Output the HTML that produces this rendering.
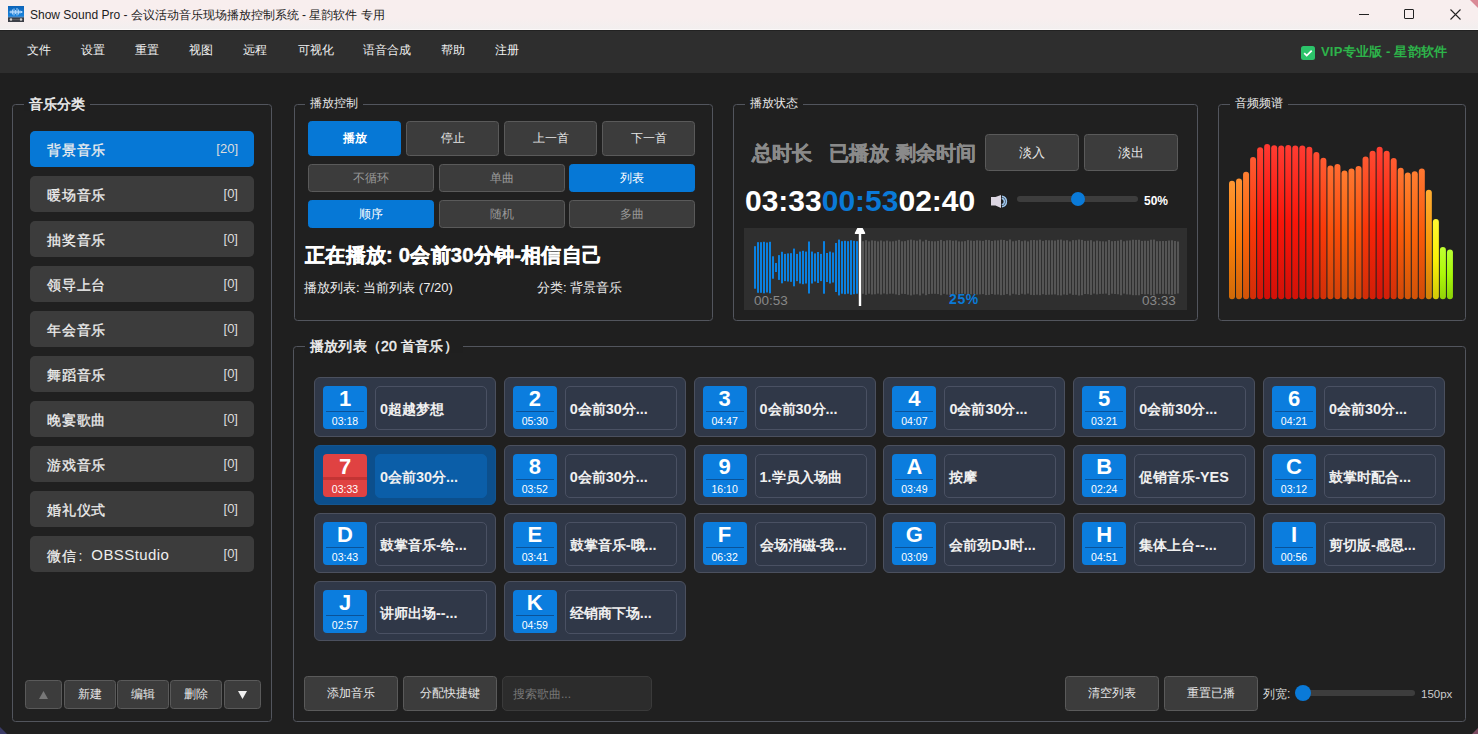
<!DOCTYPE html><html><head><meta charset="utf-8"><style>
*{box-sizing:border-box;margin:0;padding:0}
html,body{width:1478px;height:734px;overflow:hidden;background:#1f1f1f;font-family:"Liberation Sans", sans-serif;color:#fff}
.a{position:absolute}
.sb{-webkit-text-stroke:0.45px currentColor}
.t{position:absolute;white-space:nowrap;line-height:1}
.grp{position:absolute;border:1px solid #52555d;border-radius:3.5px;background:#202020}
.gt{position:absolute;white-space:nowrap;line-height:1;background:#1f1f1f;padding:0 5px}
.btn{position:absolute;background:#3c3c3c;border:1px solid #5a5a5a;border-radius:3.5px;display:flex;align-items:center;justify-content:center;white-space:nowrap;color:#e6e6e6;font-size:12px}
.blue{background:#0678d6;border-color:#0678d6;color:#fff}
.cat{position:absolute;left:30px;width:224px;height:36px;background:#3c3c3c;border-radius:5px}
.cat .n{position:absolute;left:17px;top:12px;font-size:14.2px;letter-spacing:0.8px;-webkit-text-stroke:0.3px currentColor;line-height:1;color:#eee}
.cat .c{position:absolute;right:16px;top:11px;font-size:13px;line-height:1;color:#ddd}
.tile{position:absolute;width:182px;height:60px;background:#303848;border:1px solid #4b505e;border-radius:6px}
.badge{position:absolute;left:8px;top:8px;width:44px;height:43px;background:#0b7dde;border-radius:4px;overflow:hidden}
.badge .num{position:absolute;left:0;right:0;top:2px;text-align:center;font-size:22px;font-weight:bold;line-height:1;color:#fff}
.badge .sep{position:absolute;left:3px;right:3px;top:24.5px;height:1.5px;background:#0a5298}
.badge .tm{position:absolute;left:0;right:0;top:30px;text-align:center;font-size:10.5px;line-height:1;color:#fff}
.nbox{position:absolute;left:60px;top:8px;width:112px;height:44px;border:1px solid #4a5163;border-radius:5px}
.nbox span{position:absolute;left:4px;top:15px;font-size:14.4px;font-weight:bold;line-height:1;color:#f0f0f0;white-space:nowrap}
</style></head><body>
<div class="a" style="left:0;top:0;width:1478px;height:30px;background:linear-gradient(#f8eeee 0,#f8eeee 60%,#f2efef 100%)"></div>
<div class="a" style="left:0;top:29px;width:1478px;height:1px;background:#fbf8f8"></div>
<svg class="a" style="left:8px;top:6px" width="16" height="16" viewBox="0 0 16 16">
<defs><linearGradient id="ic" x1="0" y1="0" x2="0" y2="1"><stop offset="0" stop-color="#0d63b8"/><stop offset="1" stop-color="#1a86e0"/></linearGradient></defs>
<rect x="0" y="0" width="16" height="11" fill="url(#ic)"/>
<rect x="0" y="11" width="16" height="5" fill="#3b3f47"/>
<path d="M1.5 6h13" stroke="#d8ecff" stroke-width="1"/>
<path d="M3 4.5v3M4.5 3.5v5M6 2.5v7M7.5 4v4M9 2v7.5M10.5 3.5v5M12 4.5v3M13.5 5v2" stroke="#b8dcff" stroke-width="0.9"/>
<rect x="0" y="10.5" width="16" height="1" fill="#5a8cc0"/>
<circle cx="3" cy="13.5" r="1.3" fill="#cfcfcf"/><circle cx="13" cy="13.5" r="1.3" fill="#cfcfcf"/>
<path d="M4.5 13.5h7" stroke="#666" stroke-width="0.8"/>
</svg>
<div class="t" style="left:30px;top:9px;font-size:12px;color:#1c1c1c">Show Sound Pro - 会议活动音乐现场播放控制系统 - 星韵软件 专用</div>
<div class="a" style="left:1359px;top:14px;width:10px;height:1px;background:#222"></div>
<div class="a" style="left:1404px;top:9px;width:10px;height:10px;border:1px solid #222;border-radius:1px"></div>
<svg class="a" style="left:1450px;top:9px" width="11" height="11" viewBox="0 0 11 11"><path d="M0.5 0.5L10.5 10.5M10.5 0.5L0.5 10.5" stroke="#222" stroke-width="1.1"/></svg>
<div class="a" style="left:0;top:30px;width:1478px;height:43px;background:#2e2e2e"></div>
<div class="a" style="left:0;top:30px;width:1478px;height:1px;background:#222"></div>
<div class="t" style="left:27px;top:44px;font-size:12px;color:#f0f0f0">文件</div>
<div class="t" style="left:81px;top:44px;font-size:12px;color:#f0f0f0">设置</div>
<div class="t" style="left:135px;top:44px;font-size:12px;color:#f0f0f0">重置</div>
<div class="t" style="left:189px;top:44px;font-size:12px;color:#f0f0f0">视图</div>
<div class="t" style="left:243px;top:44px;font-size:12px;color:#f0f0f0">远程</div>
<div class="t" style="left:298px;top:44px;font-size:12px;color:#f0f0f0">可视化</div>
<div class="t" style="left:363px;top:44px;font-size:12px;color:#f0f0f0">语音合成</div>
<div class="t" style="left:441px;top:44px;font-size:12px;color:#f0f0f0">帮助</div>
<div class="t" style="left:495px;top:44px;font-size:12px;color:#f0f0f0">注册</div>
<svg class="a" style="left:1301px;top:46px" width="14" height="14" viewBox="0 0 14 14"><rect width="14" height="14" rx="2.5" fill="#2cc46a"/><path d="M3.2 7.2l2.5 2.4 5-5" stroke="#fff" stroke-width="1.8" fill="none"/></svg>
<div class="t" style="left:1321px;top:45px;font-size:13px;letter-spacing:0.2px;font-weight:bold;color:#2db34a">VIP专业版 - 星韵软件</div>
<div class="grp" style="left:12px;top:104px;width:260px;height:618px"></div>
<div class="gt" style="-webkit-text-stroke:0.5px currentColor;left:24px;top:97.5px;font-size:13.6px;color:#f0f0f0">音乐分类</div>
<div class="cat" style="top:131px;background:#0678d6"><div class="n">背景音乐</div><div class="c">[20]</div></div>
<div class="cat" style="top:176px"><div class="n">暖场音乐</div><div class="c">[0]</div></div>
<div class="cat" style="top:221px"><div class="n">抽奖音乐</div><div class="c">[0]</div></div>
<div class="cat" style="top:266px"><div class="n">领导上台</div><div class="c">[0]</div></div>
<div class="cat" style="top:311px"><div class="n">年会音乐</div><div class="c">[0]</div></div>
<div class="cat" style="top:356px"><div class="n">舞蹈音乐</div><div class="c">[0]</div></div>
<div class="cat" style="top:401px"><div class="n">晚宴歌曲</div><div class="c">[0]</div></div>
<div class="cat" style="top:446px"><div class="n">游戏音乐</div><div class="c">[0]</div></div>
<div class="cat" style="top:491px"><div class="n">婚礼仪式</div><div class="c">[0]</div></div>
<div class="cat" style="top:536px"><div class="n">微信<span style='-webkit-text-stroke:0;margin:0 8px 0 2px'>:</span><span style='-webkit-text-stroke:0;letter-spacing:0.4px;font-size:15px;position:relative;top:-1px'>OBSStudio</span></div><div class="c">[0]</div></div>
<div class="btn" style="left:25px;top:680px;width:37px;height:29px"><svg width="9" height="8" style="position:absolute;left:12.5px;top:10px"><path d="M4.5 0L9 8H0z" fill="#777"/></svg></div>
<div class="btn" style="left:64px;top:680px;width:52px;height:29px">新建</div>
<div class="btn" style="left:117px;top:680px;width:52px;height:29px">编辑</div>
<div class="btn" style="left:170px;top:680px;width:52px;height:29px">删除</div>
<div class="btn" style="left:224px;top:680px;width:37px;height:29px"><svg width="9" height="8" style="position:absolute;left:13px;top:10px"><path d="M0 0H9L4.5 8z" fill="#f0f0f0"/></svg></div>
<div class="grp" style="left:294px;top:104px;width:419px;height:217px"></div>
<div class="gt" style="left:305px;top:97px;font-size:12px;color:#e8e8e8">播放控制</div>
<div class="btn blue" style="left:308px;top:121px;width:93px;height:35px;font-size:12px;font-weight:bold">播放</div>
<div class="btn" style="left:406px;top:121px;width:93px;height:35px;font-size:12px">停止</div>
<div class="btn" style="left:504px;top:121px;width:93px;height:35px;font-size:12px">上一首</div>
<div class="btn" style="left:602px;top:121px;width:93px;height:35px;font-size:12px">下一首</div>
<div class="btn" style="left:308.0px;top:164px;width:126px;height:28px;font-size:11.5px;color:#999">不循环</div>
<div class="btn" style="left:438.5px;top:164px;width:126px;height:28px;font-size:11.5px;color:#999">单曲</div>
<div class="btn blue" style="left:569.0px;top:164px;width:126px;height:28px;font-size:11.5px;color:#fff">列表</div>
<div class="btn blue" style="left:308.0px;top:200px;width:126px;height:28px;font-size:11.5px;color:#fff">顺序</div>
<div class="btn" style="left:438.5px;top:200px;width:126px;height:28px;font-size:11.5px;color:#999">随机</div>
<div class="btn" style="left:569.0px;top:200px;width:126px;height:28px;font-size:11.5px;color:#999">多曲</div>
<div class="t sb" style="left:305px;top:245px;letter-spacing:0.25px;font-size:20.2px;font-weight:bold;color:#fff">正在播放: 0会前30分钟-相信自己</div>
<div class="t" style="left:304px;top:281px;font-size:13px;color:#eee">播放列表: 当前列表 (7/20)</div>
<div class="t" style="left:537px;top:281px;font-size:13px;color:#eee">分类: 背景音乐</div>
<div class="grp" style="left:733px;top:104px;width:465px;height:217px"></div>
<div class="gt" style="left:745px;top:97px;font-size:12px;color:#e8e8e8">播放状态</div>
<div class="t sb" style="left:752px;top:143px;font-size:20px;font-weight:bold;color:#8a8a8a">总时长</div>
<div class="t sb" style="left:829px;top:143px;font-size:20px;font-weight:bold;color:#8a8a8a">已播放</div>
<div class="t sb" style="left:896px;top:143px;font-size:20px;font-weight:bold;color:#8a8a8a">剩余时间</div>
<div class="btn" style="left:985px;top:134px;width:94px;height:37px;font-size:13px">淡入</div>
<div class="btn" style="left:1084px;top:134px;width:94px;height:37px;font-size:13px">淡出</div>
<div class="t" style="left:745px;top:186px;font-size:30px;font-weight:bold;color:#fff">03:33<span style="color:#0a7ad8">00:53</span>02:40</div>
<svg class="a" style="left:984px;top:188px" width="30" height="24" viewBox="0 0 30 24"><path d="M7 9H11.5L17 7V20L11.5 17.5H7z" fill="#dcd6e2"/><path d="M17.8 10.2A3.4 3.4 0 0 1 17.8 16.8" stroke="#9cc4ec" stroke-width="1.5" fill="none"/><path d="M18 8.2A5.4 5.4 0 0 1 18 18.8" stroke="#9cc4ec" stroke-width="1.6" fill="none"/></svg>
<div class="a" style="left:1017px;top:196px;width:121px;height:6px;background:#3d3d3d;border-radius:3px"></div>
<div class="a" style="left:1071px;top:192px;width:14px;height:14px;background:#0a7ad8;border-radius:50%"></div>
<div class="t" style="left:1144px;top:195px;font-size:12px;font-weight:bold;color:#fff">50%</div>
<div class="a" style="left:744px;top:228px;width:443px;height:82px;background:#2f2f2f"></div>
<svg class="a" style="left:744px;top:228px" width="444" height="82"><rect x="10" y="18.2" width="2" height="42.5" fill="#0a80e0"/><rect x="13" y="14.2" width="2" height="50.6" fill="#0a80e0"/><rect x="16" y="14.2" width="2" height="50.6" fill="#0a80e0"/><rect x="19" y="13.8" width="2" height="51.5" fill="#0a80e0"/><rect x="22" y="14.5" width="2" height="50.0" fill="#0a80e0"/><rect x="25" y="13.8" width="2" height="51.5" fill="#0a80e0"/><rect x="28" y="28.3" width="2" height="22.4" fill="#0a80e0"/><rect x="31" y="35.0" width="2" height="9.0" fill="#0a80e0"/><rect x="34" y="27.1" width="2" height="24.8" fill="#0a80e0"/><rect x="37" y="23.8" width="2" height="31.5" fill="#0a80e0"/><rect x="40" y="25.9" width="2" height="27.2" fill="#0a80e0"/><rect x="43" y="25.4" width="2" height="28.1" fill="#0a80e0"/><rect x="46" y="25.2" width="2" height="28.6" fill="#0a80e0"/><rect x="49" y="20.6" width="2" height="37.7" fill="#0a80e0"/><rect x="52" y="25.9" width="2" height="27.2" fill="#0a80e0"/><rect x="55" y="23.6" width="2" height="31.9" fill="#0a80e0"/><rect x="58" y="22.8" width="2" height="33.4" fill="#0a80e0"/><rect x="61" y="23.6" width="2" height="31.9" fill="#0a80e0"/><rect x="64" y="13.5" width="2" height="52.0" fill="#0a80e0"/><rect x="67" y="23.6" width="2" height="31.9" fill="#0a80e0"/><rect x="70" y="25.4" width="2" height="28.1" fill="#0a80e0"/><rect x="73" y="24.0" width="2" height="31.0" fill="#0a80e0"/><rect x="76" y="25.9" width="2" height="27.2" fill="#0a80e0"/><rect x="79" y="13.2" width="2" height="52.5" fill="#0a80e0"/><rect x="82" y="25.0" width="2" height="29.0" fill="#0a80e0"/><rect x="85" y="23.6" width="2" height="31.9" fill="#0a80e0"/><rect x="88" y="24.5" width="2" height="30.0" fill="#0a80e0"/><rect x="91" y="15.0" width="2" height="49.0" fill="#0a80e0"/><rect x="94" y="11.6" width="2" height="55.8" fill="#0a80e0"/><rect x="97" y="13.2" width="2" height="52.5" fill="#0a80e0"/><rect x="100" y="12.8" width="2" height="53.4" fill="#0a80e0"/><rect x="103" y="13.2" width="2" height="52.5" fill="#0a80e0"/><rect x="106" y="12.3" width="2" height="54.4" fill="#0a80e0"/><rect x="109" y="12.8" width="2" height="53.4" fill="#0a80e0"/><rect x="112" y="13.2" width="2" height="52.5" fill="#0a80e0"/><rect x="115" y="12.9" width="2" height="53.3" fill="#555"/><rect x="118" y="13.2" width="2" height="52.6" fill="#555"/><rect x="121" y="12.2" width="2" height="54.6" fill="#555"/><rect x="124" y="13.4" width="2" height="52.3" fill="#555"/><rect x="127" y="12.4" width="2" height="54.1" fill="#555"/><rect x="130" y="12.8" width="2" height="53.5" fill="#555"/><rect x="133" y="13.4" width="2" height="52.2" fill="#555"/><rect x="136" y="12.5" width="2" height="54.0" fill="#555"/><rect x="139" y="13.4" width="2" height="52.1" fill="#555"/><rect x="142" y="12.6" width="2" height="53.7" fill="#555"/><rect x="145" y="13.4" width="2" height="52.3" fill="#555"/><rect x="148" y="13.3" width="2" height="52.4" fill="#555"/><rect x="151" y="12.7" width="2" height="53.7" fill="#555"/><rect x="154" y="11.8" width="2" height="55.3" fill="#555"/><rect x="157" y="13.3" width="2" height="52.5" fill="#555"/><rect x="160" y="13.1" width="2" height="52.9" fill="#555"/><rect x="163" y="12.2" width="2" height="54.5" fill="#555"/><rect x="166" y="11.6" width="2" height="55.8" fill="#555"/><rect x="169" y="12.3" width="2" height="54.3" fill="#555"/><rect x="172" y="12.7" width="2" height="53.6" fill="#555"/><rect x="175" y="11.5" width="2" height="55.9" fill="#555"/><rect x="178" y="13.4" width="2" height="52.2" fill="#555"/><rect x="181" y="11.8" width="2" height="55.4" fill="#555"/><rect x="184" y="12.9" width="2" height="53.2" fill="#555"/><rect x="187" y="13.2" width="2" height="52.6" fill="#555"/><rect x="190" y="13.3" width="2" height="52.5" fill="#555"/><rect x="193" y="12.9" width="2" height="53.2" fill="#555"/><rect x="196" y="11.9" width="2" height="55.3" fill="#555"/><rect x="199" y="13.1" width="2" height="52.7" fill="#555"/><rect x="202" y="12.3" width="2" height="54.3" fill="#555"/><rect x="205" y="12.2" width="2" height="54.6" fill="#555"/><rect x="208" y="12.8" width="2" height="53.5" fill="#555"/><rect x="211" y="12.4" width="2" height="54.2" fill="#555"/><rect x="214" y="13.4" width="2" height="52.3" fill="#555"/><rect x="217" y="13.4" width="2" height="52.2" fill="#555"/><rect x="220" y="13.1" width="2" height="52.8" fill="#555"/><rect x="223" y="12.1" width="2" height="54.7" fill="#555"/><rect x="226" y="12.6" width="2" height="53.7" fill="#555"/><rect x="229" y="12.9" width="2" height="53.3" fill="#555"/><rect x="232" y="12.3" width="2" height="54.3" fill="#555"/><rect x="235" y="12.6" width="2" height="53.8" fill="#555"/><rect x="238" y="12.9" width="2" height="53.2" fill="#555"/><rect x="241" y="11.9" width="2" height="55.2" fill="#555"/><rect x="244" y="12.1" width="2" height="54.8" fill="#555"/><rect x="247" y="13.0" width="2" height="53.0" fill="#555"/><rect x="250" y="12.4" width="2" height="54.3" fill="#555"/><rect x="253" y="12.4" width="2" height="54.1" fill="#555"/><rect x="256" y="11.7" width="2" height="55.5" fill="#555"/><rect x="259" y="12.0" width="2" height="54.9" fill="#555"/><rect x="262" y="12.9" width="2" height="53.2" fill="#555"/><rect x="265" y="11.5" width="2" height="55.9" fill="#555"/><rect x="268" y="13.3" width="2" height="52.5" fill="#555"/><rect x="271" y="12.7" width="2" height="53.7" fill="#555"/><rect x="274" y="12.0" width="2" height="55.0" fill="#555"/><rect x="277" y="13.2" width="2" height="52.6" fill="#555"/><rect x="280" y="12.5" width="2" height="54.0" fill="#555"/><rect x="283" y="13.4" width="2" height="52.2" fill="#555"/><rect x="286" y="12.2" width="2" height="54.7" fill="#555"/><rect x="289" y="12.0" width="2" height="55.1" fill="#555"/><rect x="292" y="12.4" width="2" height="54.3" fill="#555"/><rect x="295" y="11.7" width="2" height="55.5" fill="#555"/><rect x="298" y="12.9" width="2" height="53.3" fill="#555"/><rect x="301" y="12.1" width="2" height="54.8" fill="#555"/><rect x="304" y="12.3" width="2" height="54.4" fill="#555"/><rect x="307" y="12.3" width="2" height="54.3" fill="#555"/><rect x="310" y="12.6" width="2" height="53.8" fill="#555"/><rect x="313" y="11.8" width="2" height="55.4" fill="#555"/><rect x="316" y="11.6" width="2" height="55.8" fill="#555"/><rect x="319" y="12.6" width="2" height="53.9" fill="#555"/><rect x="322" y="12.2" width="2" height="54.7" fill="#555"/><rect x="325" y="13.4" width="2" height="52.2" fill="#555"/><rect x="328" y="12.1" width="2" height="54.8" fill="#555"/><rect x="331" y="12.2" width="2" height="54.6" fill="#555"/><rect x="334" y="11.5" width="2" height="56.0" fill="#555"/><rect x="337" y="11.9" width="2" height="55.3" fill="#555"/><rect x="340" y="12.9" width="2" height="53.1" fill="#555"/><rect x="343" y="12.7" width="2" height="53.5" fill="#555"/><rect x="346" y="12.2" width="2" height="54.7" fill="#555"/><rect x="349" y="13.5" width="2" height="52.1" fill="#555"/><rect x="352" y="12.6" width="2" height="53.8" fill="#555"/><rect x="355" y="13.2" width="2" height="52.7" fill="#555"/><rect x="358" y="13.3" width="2" height="52.5" fill="#555"/><rect x="361" y="13.4" width="2" height="52.2" fill="#555"/><rect x="364" y="12.0" width="2" height="55.1" fill="#555"/><rect x="367" y="13.2" width="2" height="52.5" fill="#555"/><rect x="370" y="13.0" width="2" height="53.0" fill="#555"/><rect x="373" y="12.7" width="2" height="53.6" fill="#555"/><rect x="376" y="11.8" width="2" height="55.5" fill="#555"/><rect x="379" y="13.3" width="2" height="52.3" fill="#555"/><rect x="382" y="12.6" width="2" height="53.8" fill="#555"/><rect x="385" y="12.4" width="2" height="54.2" fill="#555"/><rect x="388" y="11.7" width="2" height="55.5" fill="#555"/><rect x="391" y="11.9" width="2" height="55.3" fill="#555"/><rect x="394" y="11.8" width="2" height="55.5" fill="#555"/><rect x="397" y="12.9" width="2" height="53.1" fill="#555"/><rect x="400" y="12.7" width="2" height="53.7" fill="#555"/><rect x="403" y="12.8" width="2" height="53.4" fill="#555"/><rect x="406" y="11.7" width="2" height="55.5" fill="#555"/><rect x="409" y="11.6" width="2" height="55.8" fill="#555"/><rect x="412" y="13.2" width="2" height="52.6" fill="#555"/><rect x="415" y="13.1" width="2" height="52.7" fill="#555"/><rect x="418" y="13.0" width="2" height="52.9" fill="#555"/><rect x="421" y="13.0" width="2" height="52.9" fill="#555"/><rect x="424" y="12.5" width="2" height="53.9" fill="#555"/><rect x="427" y="12.3" width="2" height="54.4" fill="#555"/><rect x="430" y="13.0" width="2" height="53.1" fill="#555"/><rect x="433" y="13.5" width="2" height="52.0" fill="#555"/></svg>
<div class="t" style="left:754px;top:294px;font-size:13.5px;color:#888">00:53</div>
<div class="t" style="left:1142px;top:294px;font-size:13.5px;color:#888">03:33</div>
<div class="t" style="left:949px;top:292px;font-size:14px;letter-spacing:0.6px;font-weight:bold;color:#0a7ad8">25%</div>
<svg class="a" style="left:854px;top:227px" width="12" height="80"><path d="M3.8 1.6H8.2L10.6 6.2H1.4z" fill="#fff" stroke="#fff" stroke-width="1.4" stroke-linejoin="round"/><rect x="4.8" y="5" width="2.4" height="74" fill="#fff"/></svg>
<div class="grp" style="left:1218px;top:104px;width:248px;height:217px"></div>
<div class="gt" style="left:1230px;top:97px;font-size:12px;color:#e8e8e8">音频频谱</div>
<svg class="a" style="left:1220px;top:130px" width="245" height="180"><defs><linearGradient id="g0" x1="0" y1="0" x2="0" y2="1"><stop offset="0" stop-color="#ff9632"/><stop offset="0.5" stop-color="#f97f09"/><stop offset="1" stop-color="#d16a08"/></linearGradient><linearGradient id="g1" x1="0" y1="0" x2="0" y2="1"><stop offset="0" stop-color="#ff9132"/><stop offset="0.5" stop-color="#f97809"/><stop offset="1" stop-color="#d16408"/></linearGradient><linearGradient id="g2" x1="0" y1="0" x2="0" y2="1"><stop offset="0" stop-color="#ff7f32"/><stop offset="0.5" stop-color="#f96309"/><stop offset="1" stop-color="#d15308"/></linearGradient><linearGradient id="g3" x1="0" y1="0" x2="0" y2="1"><stop offset="0" stop-color="#ff5a32"/><stop offset="0.5" stop-color="#f93709"/><stop offset="1" stop-color="#d12e08"/></linearGradient><linearGradient id="g4" x1="0" y1="0" x2="0" y2="1"><stop offset="0" stop-color="#ff4132"/><stop offset="0.5" stop-color="#f91a09"/><stop offset="1" stop-color="#d11608"/></linearGradient><linearGradient id="g5" x1="0" y1="0" x2="0" y2="1"><stop offset="0" stop-color="#ff3932"/><stop offset="0.5" stop-color="#f91109"/><stop offset="1" stop-color="#d10e08"/></linearGradient><linearGradient id="g6" x1="0" y1="0" x2="0" y2="1"><stop offset="0" stop-color="#ff3c32"/><stop offset="0.5" stop-color="#f91409"/><stop offset="1" stop-color="#d11108"/></linearGradient><linearGradient id="g7" x1="0" y1="0" x2="0" y2="1"><stop offset="0" stop-color="#ff3c32"/><stop offset="0.5" stop-color="#f91509"/><stop offset="1" stop-color="#d11208"/></linearGradient><linearGradient id="g8" x1="0" y1="0" x2="0" y2="1"><stop offset="0" stop-color="#ff3b32"/><stop offset="0.5" stop-color="#f91409"/><stop offset="1" stop-color="#d11008"/></linearGradient><linearGradient id="g9" x1="0" y1="0" x2="0" y2="1"><stop offset="0" stop-color="#ff3c32"/><stop offset="0.5" stop-color="#f91509"/><stop offset="1" stop-color="#d11208"/></linearGradient><linearGradient id="g10" x1="0" y1="0" x2="0" y2="1"><stop offset="0" stop-color="#ff3c32"/><stop offset="0.5" stop-color="#f91509"/><stop offset="1" stop-color="#d11208"/></linearGradient><linearGradient id="g11" x1="0" y1="0" x2="0" y2="1"><stop offset="0" stop-color="#ff3f32"/><stop offset="0.5" stop-color="#f91909"/><stop offset="1" stop-color="#d11508"/></linearGradient><linearGradient id="g12" x1="0" y1="0" x2="0" y2="1"><stop offset="0" stop-color="#ff4d32"/><stop offset="0.5" stop-color="#f92909"/><stop offset="1" stop-color="#d12208"/></linearGradient><linearGradient id="g13" x1="0" y1="0" x2="0" y2="1"><stop offset="0" stop-color="#ff5b32"/><stop offset="0.5" stop-color="#f93a09"/><stop offset="1" stop-color="#d13008"/></linearGradient><linearGradient id="g14" x1="0" y1="0" x2="0" y2="1"><stop offset="0" stop-color="#ff6f32"/><stop offset="0.5" stop-color="#f95109"/><stop offset="1" stop-color="#d14408"/></linearGradient><linearGradient id="g15" x1="0" y1="0" x2="0" y2="1"><stop offset="0" stop-color="#ff6b32"/><stop offset="0.5" stop-color="#f94c09"/><stop offset="1" stop-color="#d14008"/></linearGradient><linearGradient id="g16" x1="0" y1="0" x2="0" y2="1"><stop offset="0" stop-color="#ff7c32"/><stop offset="0.5" stop-color="#f96009"/><stop offset="1" stop-color="#d15008"/></linearGradient><linearGradient id="g17" x1="0" y1="0" x2="0" y2="1"><stop offset="0" stop-color="#ff7732"/><stop offset="0.5" stop-color="#f95a09"/><stop offset="1" stop-color="#d14b08"/></linearGradient><linearGradient id="g18" x1="0" y1="0" x2="0" y2="1"><stop offset="0" stop-color="#ff7032"/><stop offset="0.5" stop-color="#f95209"/><stop offset="1" stop-color="#d14508"/></linearGradient><linearGradient id="g19" x1="0" y1="0" x2="0" y2="1"><stop offset="0" stop-color="#ff5932"/><stop offset="0.5" stop-color="#f93609"/><stop offset="1" stop-color="#d12d08"/></linearGradient><linearGradient id="g20" x1="0" y1="0" x2="0" y2="1"><stop offset="0" stop-color="#ff4a32"/><stop offset="0.5" stop-color="#f92509"/><stop offset="1" stop-color="#d11f08"/></linearGradient><linearGradient id="g21" x1="0" y1="0" x2="0" y2="1"><stop offset="0" stop-color="#ff3f32"/><stop offset="0.5" stop-color="#f91909"/><stop offset="1" stop-color="#d11508"/></linearGradient><linearGradient id="g22" x1="0" y1="0" x2="0" y2="1"><stop offset="0" stop-color="#ff4a32"/><stop offset="0.5" stop-color="#f92509"/><stop offset="1" stop-color="#d11f08"/></linearGradient><linearGradient id="g23" x1="0" y1="0" x2="0" y2="1"><stop offset="0" stop-color="#ff5c32"/><stop offset="0.5" stop-color="#f93a09"/><stop offset="1" stop-color="#d13108"/></linearGradient><linearGradient id="g24" x1="0" y1="0" x2="0" y2="1"><stop offset="0" stop-color="#ff7532"/><stop offset="0.5" stop-color="#f95809"/><stop offset="1" stop-color="#d14908"/></linearGradient><linearGradient id="g25" x1="0" y1="0" x2="0" y2="1"><stop offset="0" stop-color="#ff8132"/><stop offset="0.5" stop-color="#f96609"/><stop offset="1" stop-color="#d15508"/></linearGradient><linearGradient id="g26" x1="0" y1="0" x2="0" y2="1"><stop offset="0" stop-color="#ff7e32"/><stop offset="0.5" stop-color="#f96209"/><stop offset="1" stop-color="#d15208"/></linearGradient><linearGradient id="g27" x1="0" y1="0" x2="0" y2="1"><stop offset="0" stop-color="#ff7732"/><stop offset="0.5" stop-color="#f95a09"/><stop offset="1" stop-color="#d14b08"/></linearGradient><linearGradient id="g28" x1="0" y1="0" x2="0" y2="1"><stop offset="0" stop-color="#ffad32"/><stop offset="0.5" stop-color="#f99a09"/><stop offset="1" stop-color="#d18008"/></linearGradient><linearGradient id="g29" x1="0" y1="0" x2="0" y2="1"><stop offset="0" stop-color="#fff732"/><stop offset="0.5" stop-color="#f9f109"/><stop offset="1" stop-color="#d1ca08"/></linearGradient><linearGradient id="g30" x1="0" y1="0" x2="0" y2="1"><stop offset="0" stop-color="#bfff32"/><stop offset="0.5" stop-color="#aef909"/><stop offset="1" stop-color="#92d108"/></linearGradient><linearGradient id="g31" x1="0" y1="0" x2="0" y2="1"><stop offset="0" stop-color="#b8ff32"/><stop offset="0.5" stop-color="#a6f909"/><stop offset="1" stop-color="#8bd108"/></linearGradient></defs><rect x="9.00" y="50.8" width="6" height="118.5" rx="3" fill="url(#g0)"/><rect x="16.03" y="48.6" width="6" height="120.7" rx="3" fill="url(#g1)"/><rect x="23.06" y="41.7" width="6" height="127.6" rx="3" fill="url(#g2)"/><rect x="30.09" y="27.0" width="6" height="142.3" rx="3" fill="url(#g3)"/><rect x="37.12" y="17.2" width="6" height="152.1" rx="3" fill="url(#g4)"/><rect x="44.15" y="14.0" width="6" height="155.3" rx="3" fill="url(#g5)"/><rect x="51.18" y="15.2" width="6" height="154.1" rx="3" fill="url(#g6)"/><rect x="58.21" y="15.5" width="6" height="153.8" rx="3" fill="url(#g7)"/><rect x="65.24" y="15.0" width="6" height="154.3" rx="3" fill="url(#g8)"/><rect x="72.27" y="15.5" width="6" height="153.8" rx="3" fill="url(#g9)"/><rect x="79.30" y="15.5" width="6" height="153.8" rx="3" fill="url(#g10)"/><rect x="86.33" y="16.7" width="6" height="152.6" rx="3" fill="url(#g11)"/><rect x="93.36" y="22.0" width="6" height="147.3" rx="3" fill="url(#g12)"/><rect x="100.39" y="27.7" width="6" height="141.6" rx="3" fill="url(#g13)"/><rect x="107.42" y="35.6" width="6" height="133.7" rx="3" fill="url(#g14)"/><rect x="114.45" y="33.9" width="6" height="135.4" rx="3" fill="url(#g15)"/><rect x="121.48" y="40.4" width="6" height="128.9" rx="3" fill="url(#g16)"/><rect x="128.51" y="38.5" width="6" height="130.8" rx="3" fill="url(#g17)"/><rect x="135.54" y="35.9" width="6" height="133.4" rx="3" fill="url(#g18)"/><rect x="142.57" y="26.6" width="6" height="142.7" rx="3" fill="url(#g19)"/><rect x="149.60" y="20.7" width="6" height="148.6" rx="3" fill="url(#g20)"/><rect x="156.63" y="16.7" width="6" height="152.6" rx="3" fill="url(#g21)"/><rect x="163.66" y="20.7" width="6" height="148.6" rx="3" fill="url(#g22)"/><rect x="170.69" y="27.9" width="6" height="141.4" rx="3" fill="url(#g23)"/><rect x="177.72" y="37.7" width="6" height="131.6" rx="3" fill="url(#g24)"/><rect x="184.75" y="42.5" width="6" height="126.8" rx="3" fill="url(#g25)"/><rect x="191.78" y="41.2" width="6" height="128.1" rx="3" fill="url(#g26)"/><rect x="198.81" y="38.5" width="6" height="130.8" rx="3" fill="url(#g27)"/><rect x="205.84" y="59.8" width="6" height="109.5" rx="3" fill="url(#g28)"/><rect x="212.87" y="89.0" width="6" height="80.3" rx="3" fill="url(#g29)"/><rect x="219.90" y="116.9" width="6" height="52.4" rx="3" fill="url(#g30)"/><rect x="226.93" y="119.6" width="6" height="49.7" rx="3" fill="url(#g31)"/></svg>
<div class="grp" style="left:293px;top:346px;width:1173px;height:376px"></div>
<div class="gt" style="-webkit-text-stroke:0.5px currentColor;left:305px;top:339px;font-size:14px;letter-spacing:0.2px;color:#f0f0f0">播放列表（20 首音乐）</div>
<div class="tile" style="left:314.0px;top:377px"><div class="badge"><div class="num">1</div><div class="sep"></div><div class="tm">03:18</div></div><div class="nbox"><span>0超越梦想</span></div></div>
<div class="tile" style="left:503.8px;top:377px"><div class="badge"><div class="num">2</div><div class="sep"></div><div class="tm">05:30</div></div><div class="nbox"><span>0会前30分...</span></div></div>
<div class="tile" style="left:693.6px;top:377px"><div class="badge"><div class="num">3</div><div class="sep"></div><div class="tm">04:47</div></div><div class="nbox"><span>0会前30分...</span></div></div>
<div class="tile" style="left:883.4px;top:377px"><div class="badge"><div class="num">4</div><div class="sep"></div><div class="tm">04:07</div></div><div class="nbox"><span>0会前30分...</span></div></div>
<div class="tile" style="left:1073.2px;top:377px"><div class="badge"><div class="num">5</div><div class="sep"></div><div class="tm">03:21</div></div><div class="nbox"><span>0会前30分...</span></div></div>
<div class="tile" style="left:1263.0px;top:377px"><div class="badge"><div class="num">6</div><div class="sep"></div><div class="tm">04:21</div></div><div class="nbox"><span>0会前30分...</span></div></div>
<div class="tile" style="left:314.0px;top:445px;background:#0c4f8c;border-color:#14558f"><div class="badge" style="background:#e04242"><div class="num">7</div><div class="sep" style="left:0;right:0;top:23px;height:3px;background:#c33434"></div><div class="tm">03:33</div></div><div class="nbox" style="background:#0b5ea8;border-color:#0b5ea8"><span>0会前30分...</span></div></div>
<div class="tile" style="left:503.8px;top:445px"><div class="badge"><div class="num">8</div><div class="sep"></div><div class="tm">03:52</div></div><div class="nbox"><span>0会前30分...</span></div></div>
<div class="tile" style="left:693.6px;top:445px"><div class="badge"><div class="num">9</div><div class="sep"></div><div class="tm">16:10</div></div><div class="nbox"><span>1.学员入场曲</span></div></div>
<div class="tile" style="left:883.4px;top:445px"><div class="badge"><div class="num">A</div><div class="sep"></div><div class="tm">03:49</div></div><div class="nbox"><span>按摩</span></div></div>
<div class="tile" style="left:1073.2px;top:445px"><div class="badge"><div class="num">B</div><div class="sep"></div><div class="tm">02:24</div></div><div class="nbox"><span>促销音乐-YES</span></div></div>
<div class="tile" style="left:1263.0px;top:445px"><div class="badge"><div class="num">C</div><div class="sep"></div><div class="tm">03:12</div></div><div class="nbox"><span>鼓掌时配合...</span></div></div>
<div class="tile" style="left:314.0px;top:513px"><div class="badge"><div class="num">D</div><div class="sep"></div><div class="tm">03:43</div></div><div class="nbox"><span>鼓掌音乐-给...</span></div></div>
<div class="tile" style="left:503.8px;top:513px"><div class="badge"><div class="num">E</div><div class="sep"></div><div class="tm">03:41</div></div><div class="nbox"><span>鼓掌音乐-哦...</span></div></div>
<div class="tile" style="left:693.6px;top:513px"><div class="badge"><div class="num">F</div><div class="sep"></div><div class="tm">06:32</div></div><div class="nbox"><span>会场消磁-我...</span></div></div>
<div class="tile" style="left:883.4px;top:513px"><div class="badge"><div class="num">G</div><div class="sep"></div><div class="tm">03:09</div></div><div class="nbox"><span>会前劲DJ时...</span></div></div>
<div class="tile" style="left:1073.2px;top:513px"><div class="badge"><div class="num">H</div><div class="sep"></div><div class="tm">04:51</div></div><div class="nbox"><span>集体上台--...</span></div></div>
<div class="tile" style="left:1263.0px;top:513px"><div class="badge"><div class="num">I</div><div class="sep"></div><div class="tm">00:56</div></div><div class="nbox"><span>剪切版-感恩...</span></div></div>
<div class="tile" style="left:314.0px;top:581px"><div class="badge"><div class="num">J</div><div class="sep"></div><div class="tm">02:57</div></div><div class="nbox"><span>讲师出场--...</span></div></div>
<div class="tile" style="left:503.8px;top:581px"><div class="badge"><div class="num">K</div><div class="sep"></div><div class="tm">04:59</div></div><div class="nbox"><span>经销商下场...</span></div></div>
<div class="btn" style="left:304px;top:676px;width:94px;height:35px">添加音乐</div>
<div class="btn" style="left:403px;top:676px;width:94px;height:35px">分配快捷键</div>
<div class="a" style="left:502px;top:676px;width:150px;height:35px;background:#2c2c2c;border:1px solid #3a3a3a;border-radius:5px"></div>
<div class="t" style="left:513px;top:688px;font-size:12px;color:#777">搜索歌曲...</div>
<div class="btn" style="left:1065px;top:676px;width:94px;height:35px">清空列表</div>
<div class="btn" style="left:1164px;top:676px;width:94px;height:35px">重置已播</div>
<div class="t" style="left:1263px;top:688px;font-size:12px;color:#ddd">列宽:</div>
<div class="a" style="left:1296px;top:690px;width:119px;height:6px;background:#3d3d3d;border-radius:3px"></div>
<div class="a" style="left:1295px;top:685px;width:16px;height:16px;background:#0a7ad8;border-radius:50%"></div>
<div class="t" style="left:1421px;top:689px;font-size:11.5px;color:#ccc">150px</div>
<svg class="a" style="left:1468px;top:0" width="10" height="10"><path d="M2 0H10V8z" fill="#d98a96"/></svg>
<svg class="a" style="left:0;top:726px" width="8" height="8"><path d="M0 1L7 8H0z" fill="#3a3a66"/></svg>
<svg class="a" style="left:1470px;top:726px" width="8" height="8"><path d="M8 2V8H2z" fill="#7a4a60"/></svg>
</body></html>
